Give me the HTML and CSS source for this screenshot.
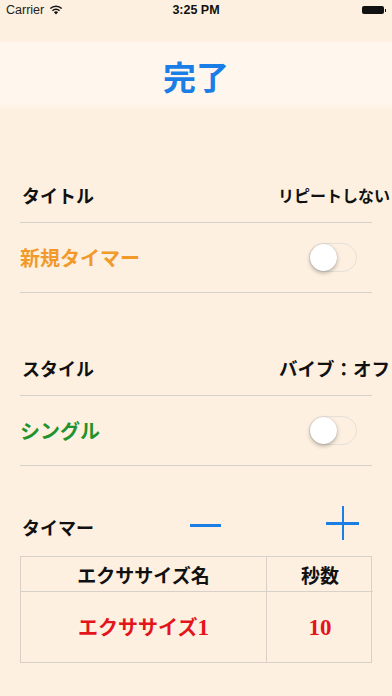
FILE: index.html
```html
<!DOCTYPE html>
<html lang="ja">
<head>
<meta charset="utf-8">
<link rel="stylesheet" href="styles.css">
</head>
<body>
<div class="status">
  <div class="status-left">Carrier
    <svg class="wifi" width="14" height="10" viewBox="0 0 14 10"><path d="M7 9.6 L4.9 7.3 A3 3 0 0 1 9.1 7.3 Z" fill="#111"/><path d="M2.9 5.2 A5.8 5.8 0 0 1 11.1 5.2 L10.1 6.3 A4.4 4.4 0 0 0 3.9 6.3 Z" fill="#111"/><path d="M0.8 3 A8.8 8.8 0 0 1 13.2 3 L12.2 4.1 A7.3 7.3 0 0 0 1.8 4.1 Z" fill="#111"/></svg>
  </div>
  <div class="status-time">3:25 PM</div>
  <div class="status-right"><span class="battery"></span><span class="battery-tip"></span></div>
</div>
<div class="header"><span class="done">完了</span></div>
<main class="content">
  <section class="group">
    <div class="head-row"><span class="label">タイトル</span><span class="value v-small">リピートしない</span></div>
    <div class="row"><span class="label orange">新規タイマー</span><span class="switch"><span class="knob"></span></span></div>
  </section>
  <section class="group">
    <div class="head-row"><span class="label">スタイル</span><span class="value v-large">バイブ：オフ</span></div>
    <div class="row"><span class="label green">シングル</span><span class="switch"><span class="knob"></span></span></div>
  </section>
  <div class="timer-row">
    <span class="label">タイマー</span>
    <span class="minus"></span>
    <span class="plus"><span class="ph"></span><span class="pv"></span></span>
  </div>
  <div class="table">
    <div class="cell th name">エクササイズ名</div>
    <div class="cell th sec">秒数</div>
    <div class="cell td name red">エクササイズ<span class="digit">1</span></div>
    <div class="cell td sec red"><span class="digit">10</span></div>
  </div>
</main>
</body>
</html>
```
FILE: styles.css
```css
html, body {
  margin: 0;
  padding: 0;
}
body {
  width: 392px;
  height: 696px;
  overflow: hidden;
  background: #fdf0e0;
  font-family: "Noto Sans CJK JP", "Liberation Sans", sans-serif;
  color: #111;
}
.status {
  height: 20px;
  display: flex;
  align-items: center;
  justify-content: space-between;
  padding: 0 6px;
  font-family: "Liberation Sans", Arial, sans-serif;
  font-size: 12.5px;
  position: relative;
}
.status-left {
  display: flex;
  align-items: center;
  gap: 5px;
  color: #222;
}
.status-time {
  position: absolute;
  left: 0;
  right: 0;
  text-align: center;
  font-weight: bold;
  font-size: 12.5px;
}
.status-right {
  display: flex;
  align-items: center;
}
.battery {
  width: 22px;
  height: 8px;
  background: #111;
  border-radius: 2px;
}
.battery-tip {
  width: 1.5px;
  height: 3px;
  background: #111;
  margin-left: 1px;
}
.header {
  margin-top: 22px;
  height: 68px;
  background: linear-gradient(#fff7ee 0%, #fff7ee 88%, #fdf0e0 100%);
  display: flex;
  align-items: center;
  justify-content: center;
}
.done {
  color: #1a7ee6;
  font-size: 33px;
  font-weight: bold;
  line-height: 1;
}
.content {
  padding: 0 20px;
}
.group {
  margin-top: 58px;
}
.group + .group {
  margin-top: 48px;
}
.head-row {
  height: 54px;
  display: flex;
  align-items: center;
  justify-content: space-between;
  border-bottom: 1px solid #d6d1cb;
}
.label {
  font-size: 18px;
  font-weight: bold;
  line-height: 1;
  padding-left: 2px;
}
.value {
  font-weight: bold;
  line-height: 1;
  margin-right: -18px;
  white-space: nowrap;
}
.v-small { font-size: 16px; }
.v-large { font-size: 18.5px; }
.row {
  height: 69px;
  display: flex;
  align-items: center;
  justify-content: space-between;
  border-bottom: 1px solid #d6d1cb;
}
.row .label {
  font-size: 20px;
  padding-left: 0;
}
.orange { color: #f19a2a; }
.green { color: #22922c; }
.red { color: #e3141b; }
.switch {
  width: 46px;
  height: 27px;
  border: 1px solid #e5e0da;
  border-radius: 15px;
  background: #fdf0e0;
  margin-right: 15px;
  position: relative;
  display: block;
}
.knob {
  position: absolute;
  left: 0;
  top: 0;
  width: 27px;
  height: 27px;
  border-radius: 50%;
  background: #fff;
  box-shadow: 0 2px 4px rgba(0,0,0,0.28), 0 0 1px rgba(0,0,0,0.2);
}
.timer-row {
  height: 58px;
  margin-top: 32px;
  display: flex;
  align-items: center;
}
.timer-row .label {
  width: 168px;
}
.minus {
  width: 31px;
  height: 3px;
  background: #1a7ee6;
  margin-top: -4px;
}
.plus {
  position: relative;
  width: 33px;
  height: 34px;
  margin-left: 105px;
  margin-top: -8px;
}
.ph {
  position: absolute;
  left: 0;
  right: 0;
  top: 16px;
  height: 2.5px;
  background: #1a7ee6;
}
.pv {
  position: absolute;
  top: 0;
  bottom: 0;
  left: 15.5px;
  width: 2.5px;
  background: #1a7ee6;
}
.table {
  display: grid;
  grid-template-columns: 246px 106px;
  grid-template-rows: 35px 70px;
  border: 1px solid #d8d1ca;
  box-sizing: border-box;
  width: 352px;
}
.cell {
  display: flex;
  align-items: center;
  justify-content: center;
  font-weight: bold;
  line-height: 1;
}
.th { border-bottom: 1px solid #d8d1ca; font-size: 19px; }
.td { font-size: 20px; }
.digit {
  font-family: "Liberation Serif", serif;
  font-size: 23px;
}
.name { border-right: 1px solid #d8d1ca; }
```
